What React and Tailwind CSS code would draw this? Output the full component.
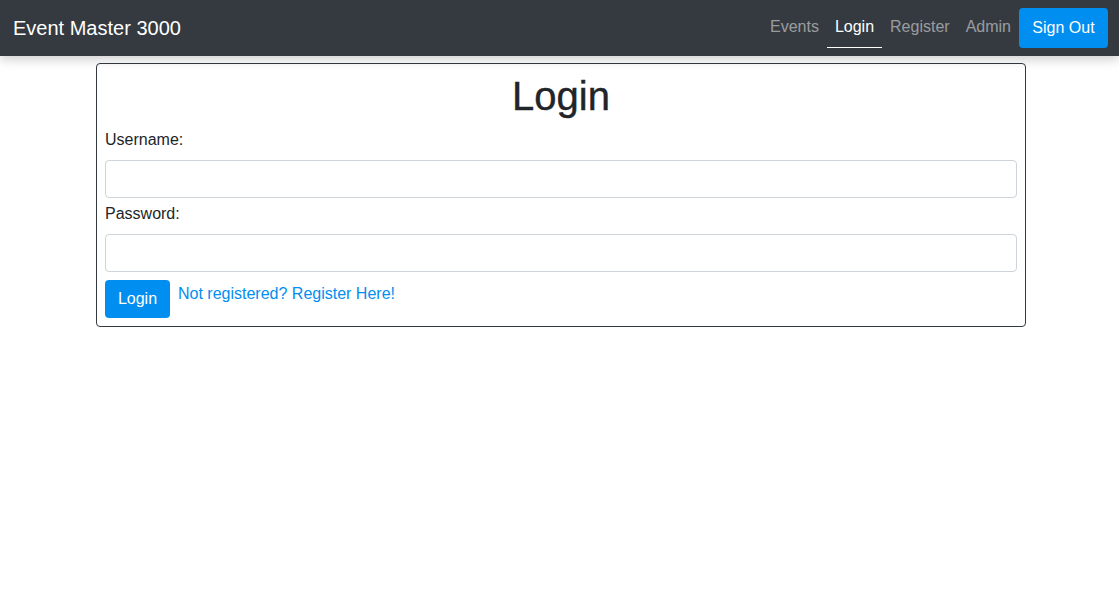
const NAV_LINKS = [
  { label: 'Events', active: false },
  { label: 'Login', active: true },
  { label: 'Register', active: false },
  { label: 'Admin', active: false },
]

function Navbar() {
  return (
    <nav className="h-14 bg-[#343a40] flex items-center justify-between pl-[13px] pr-[11px] shadow-[0_4px_10px_rgba(0,0,0,0.18)] relative z-10">
      <span className="text-[20px] text-white leading-none mb-[1px]">Event Master 3000</span>
      <div className="flex items-center h-full">
        {NAV_LINKS.map((link) => (
          <span
            key={link.label}
            className={`px-2 h-[40px] pb-[1px] flex items-center text-base ${
              link.active
                ? 'text-white border-b border-white'
                : 'text-[rgba(255,255,255,0.5)] border-b border-transparent'
            }`}
          >
            {link.label}
          </span>
        ))}
        <button className="h-10 w-[89px] mb-[1px] bg-[#008ef0] text-white text-base rounded-[4px] flex items-center justify-center">
          Sign Out
        </button>
      </div>
    </nav>
  )
}

export default function App() {
  return (
    <div className="min-h-[595px] bg-white text-[#212529] font-['Liberation_Sans',Arial,sans-serif]">
      <Navbar />
      <div className="pt-[7px]">
        <div className="w-[930px] ml-[96px] border border-[#343a40] rounded-[4px] p-2">
          <h1 className="text-[40px] leading-[48px] font-medium text-center mb-2 [-webkit-text-stroke:0.4px_#212529]">Login</h1>
          <form className="flex flex-col" onSubmit={(e) => e.preventDefault()}>
            <label className="text-base leading-6 mb-2">Username:</label>
            <input type="text" className="h-[38px] border border-[#ced4da] rounded-[4px] px-3 mb-1" />
            <label className="text-base leading-6 mb-2">Password:</label>
            <input type="password" className="h-[38px] border border-[#ced4da] rounded-[4px] px-3 mb-2" />
            <div className="flex items-start gap-2">
              <button type="submit" className="h-[38px] w-[65px] bg-[#008ef0] text-white text-base rounded-[4px]">
                Login
              </button>
              <a href="#" className="text-[#008ef0] text-base leading-6 pt-[2px]">
                Not registered? Register Here!
              </a>
            </div>
          </form>
        </div>
      </div>
    </div>
  )
}
